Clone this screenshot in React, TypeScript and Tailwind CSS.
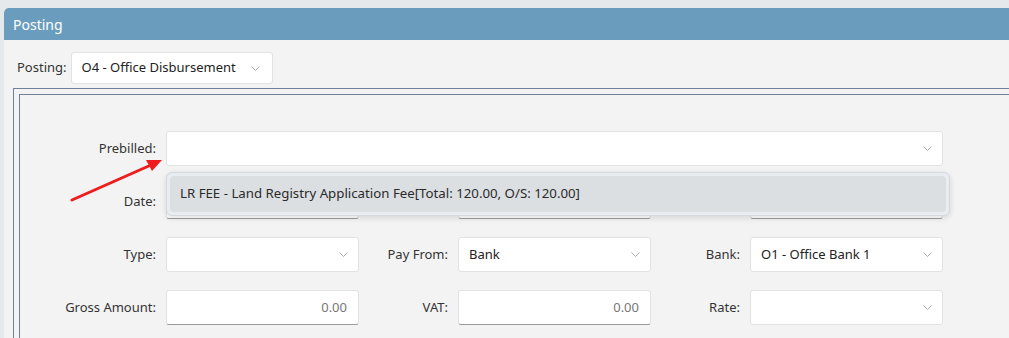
import type { ReactNode } from "react";

const font = { fontFamily: '"Noto Sans", "Open Sans", sans-serif' };

function Chevron() {
  return (
    <svg width="9" height="5" viewBox="0 0 9 5" className="shrink-0">
      <path d="M0.5 0.5 L4.5 4.5 L8.5 0.5" fill="none" stroke="#a9a9a9" strokeWidth="1" />
    </svg>
  );
}

function Select({ value, className = "" }: { value?: string; className?: string }) {
  return (
    <div
      className={`flex h-[35px] items-center justify-between rounded-[3px] border border-[#e2e2e2] bg-white pl-[10px] pr-[10px] text-[13px] text-[#222] ${className}`}
    >
      <span>{value ?? ""}</span>
      <Chevron />
    </div>
  );
}

function NumberInput() {
  return (
    <div className="flex h-[35px] items-center justify-end rounded-[3px] border border-[#e2e2e2] border-b-[#9a9a9a] bg-white pr-[11px] text-[13px] text-[#777]">
      0.00
    </div>
  );
}

function Label({ children }: { children: ReactNode }) {
  return <div className="flex items-center justify-end whitespace-nowrap pr-[10px] text-[13px] text-[#333]">{children}</div>;
}

export default function App() {
  return (
    <div className="relative h-[338px] w-[1009px] overflow-hidden bg-[#e6e9eb] pl-[4px] pt-[8px]" style={font}>
      <div className="h-full rounded-tl-[5px] bg-[#f3f3f3]">
        <div className="flex h-[32px] items-center rounded-tl-[5px] bg-[#6a9dbd] px-[9px] text-[14px] text-white">Posting</div>

        <div className="mt-[12px] flex items-center pl-[13px]">
          <span className="text-[13px] text-[#333]">Posting:</span>
          <div className="ml-[4px] flex h-[32px] w-[202px] items-center justify-between rounded-[3px] border border-[#e2e2e2] bg-white pl-[10px] pr-[12px] text-[13px] text-[#222]">
            <span>O4 - Office Disbursement</span>
            <Chevron />
          </div>
        </div>

        <div className="ml-[9px] mt-[4px] h-[400px] w-[1100px] border-l border-t border-[#6f8099] pl-[5px] pt-[5px]">
          <div className="h-full border-l border-t border-[#6f8099] pl-[47px] pt-[36px]">
            <div className="relative grid grid-cols-[99px_193px_99px_193px_99px_193px] gap-y-[18px]">
              <Label>Prebilled:</Label>
              <Select className="col-span-5" />

              <Label>Date:</Label>
              <div className="h-[35px] rounded-[3px] border border-[#e2e2e2] border-b-[#9a9a9a] bg-white" />
              <Label>&nbsp;</Label>
              <div className="h-[35px] rounded-[3px] border border-[#e2e2e2] border-b-[#9a9a9a] bg-white" />
              <Label>&nbsp;</Label>
              <div className="h-[35px] rounded-[3px] border border-[#e2e2e2] border-b-[#9a9a9a] bg-white" />

              <Label>Type:</Label>
              <Select />
              <Label>Pay From:</Label>
              <Select value="Bank" />
              <Label>Bank:</Label>
              <Select value="O1 - Office Bank 1" />

              <Label>Gross Amount:</Label>
              <NumberInput />
              <Label>VAT:</Label>
              <NumberInput />
              <Label>Rate:</Label>
              <Select />

              <div className="absolute left-[99px] top-[41px] h-[44px] w-[784px] rounded-[6px] border border-[#d3d9df] bg-[#eaedf0] p-[3px] shadow-[0_2px_6px_rgba(0,0,0,0.12)]">
                <div className="flex h-full items-center rounded-[4px] bg-[#dcdfe2] pl-[10px] text-[13.25px] text-[#2a2a2a]">
                  LR FEE - Land Registry Application Fee[Total: 120.00, O/S: 120.00]
                </div>
              </div>
            </div>
          </div>
        </div>
      </div>

      <svg className="pointer-events-none absolute left-0 top-0" width="1009" height="338">
        <line x1="72" y1="200" x2="151" y2="165" stroke="#ee1c1c" strokeWidth="3" strokeLinecap="round" />
        <polygon points="162,160 146,160 152,171" fill="#ee1c1c" />
      </svg>
    </div>
  );
}
